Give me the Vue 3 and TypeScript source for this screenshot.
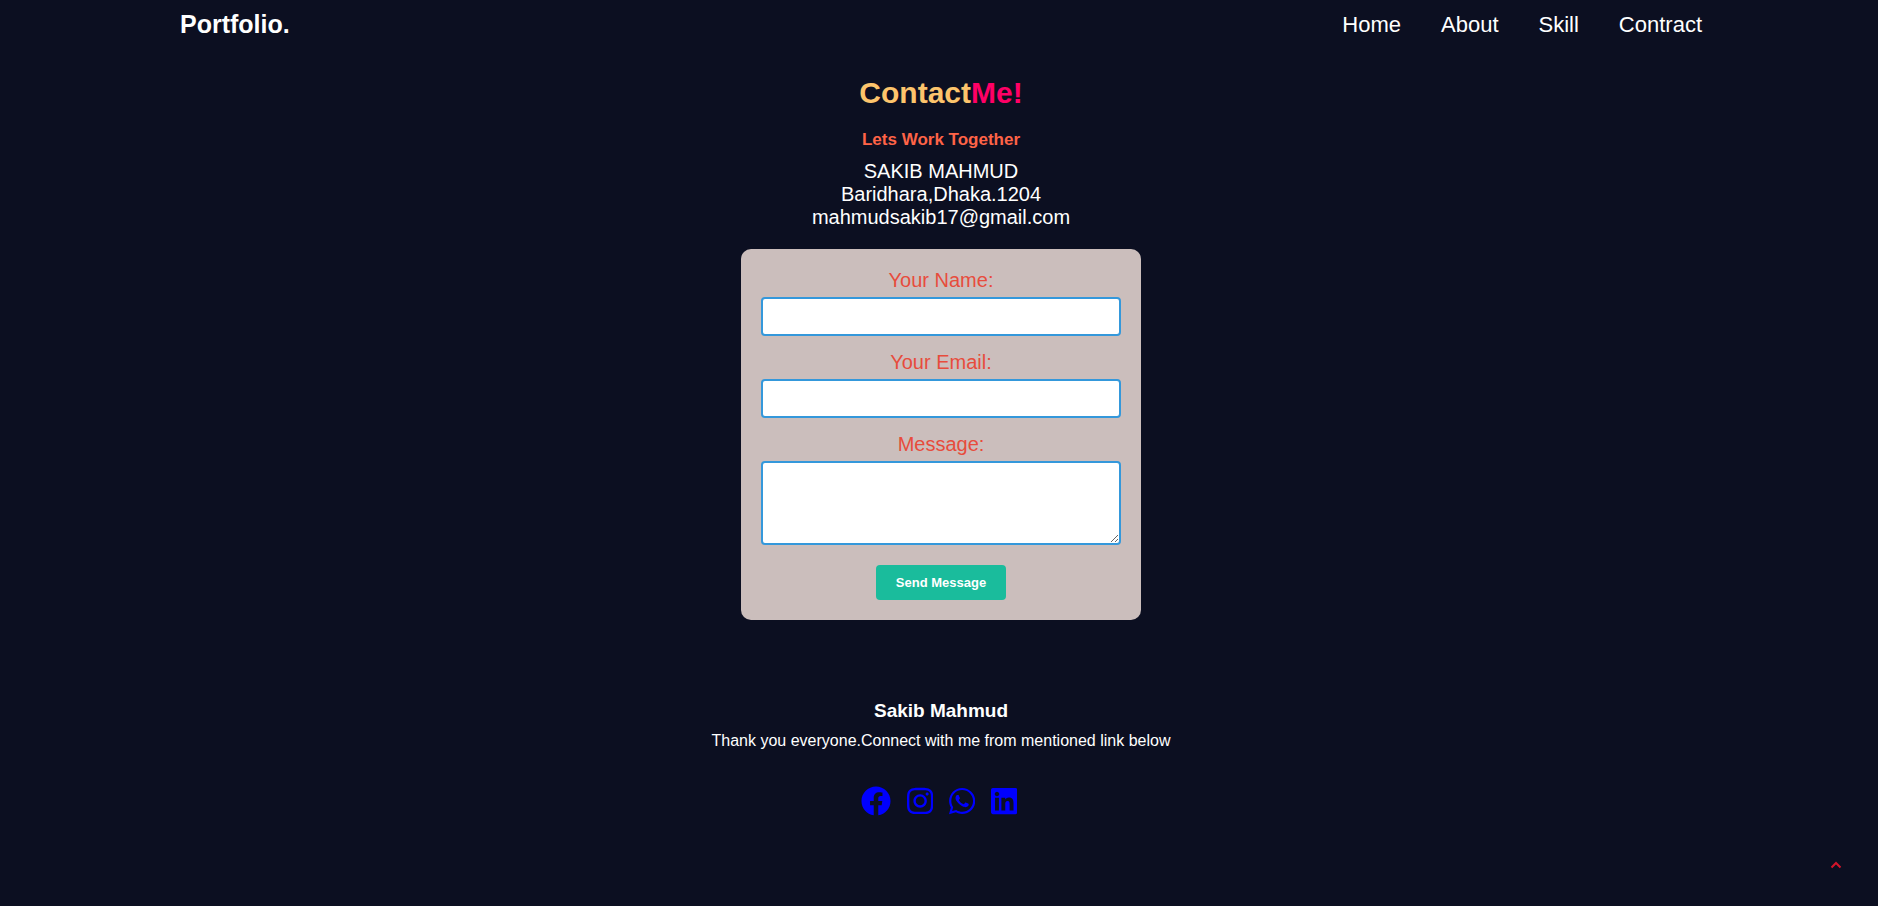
<script setup lang="ts">
import { ref } from 'vue'

interface NavLink {
  label: string
  href: string
}

interface SocialLink {
  label: string
  href: string
  width: number
  path: string
}

const navLinks: NavLink[] = [
  { label: 'Home', href: '#home' },
  { label: 'About', href: '#about' },
  { label: 'Skill', href: '#skill' },
  { label: 'Contract', href: '#contact' },
]

const socialLinks: SocialLink[] = [
  {
    label: 'Facebook',
    href: '#facebook',
    width: 512,
    path: 'M504 256C504 119 393 8 256 8S8 119 8 256c0 123.78 90.69 226.38 209.25 245V327.69h-63V256h63v-54.64c0-62.15 37-96.48 93.67-96.48 27.14 0 55.52 4.84 55.52 4.84v61h-31.28c-30.8 0-40.41 19.12-40.41 38.73V256h68.78l-11 71.69h-57.78V501C413.31 482.38 504 379.78 504 256z',
  },
  {
    label: 'Instagram',
    href: '#instagram',
    width: 448,
    path: 'M224.1 141c-63.6 0-114.9 51.3-114.9 114.9s51.3 114.9 114.9 114.9S339 319.5 339 255.9 287.7 141 224.1 141zm0 189.6c-41.1 0-74.7-33.5-74.7-74.7s33.5-74.7 74.7-74.7 74.7 33.5 74.7 74.7-33.6 74.7-74.7 74.7zm146.4-194.3c0 14.9-12 26.8-26.8 26.8-14.9 0-26.8-12-26.8-26.8s12-26.8 26.8-26.8 26.8 12 26.8 26.8zm76.1 27.2c-1.7-35.9-9.9-67.7-36.2-93.9-26.2-26.2-58-34.4-93.9-36.2-37-2.1-147.9-2.1-184.9 0-35.8 1.7-67.6 9.9-93.9 36.1s-34.4 58-36.2 93.9c-2.1 37-2.1 147.9 0 184.9 1.7 35.9 9.9 67.7 36.2 93.9s58 34.4 93.9 36.2c37 2.1 147.9 2.1 184.9 0 35.9-1.7 67.7-9.9 93.9-36.2 26.2-26.2 34.4-58 36.2-93.9 2.1-37 2.1-147.8 0-184.8zM398.8 388c-7.8 19.6-22.9 34.7-42.6 42.6-29.5 11.7-99.5 9-132.1 9s-102.7 2.6-132.1-9c-19.6-7.8-34.7-22.9-42.6-42.6-11.7-29.5-9-99.5-9-132.1s-2.6-102.7 9-132.1c7.8-19.6 22.9-34.7 42.6-42.6 29.5-11.7 99.5-9 132.1-9s102.7-2.6 132.1 9c19.6 7.8 34.7 22.9 42.6 42.6 11.7 29.5 9 99.5 9 132.1s2.7 102.7-9 132.1z',
  },
  {
    label: 'WhatsApp',
    href: '#whatsapp',
    width: 448,
    path: 'M380.9 97.1C339 55.1 283.2 32 223.9 32c-122.4 0-222 99.6-222 222 0 39.1 10.2 77.3 29.6 111L0 480l117.7-30.9c32.4 17.7 68.9 27 106.1 27h.1c122.3 0 224.1-99.6 224.1-222 0-59.3-25.2-115-67.1-157zm-157 341.6c-33.2 0-65.7-8.9-94-25.7l-6.7-4-69.8 18.3L72 359.2l-4.4-7c-18.5-29.4-28.2-63.3-28.2-98.2 0-101.7 82.8-184.5 184.6-184.5 49.3 0 95.6 19.2 130.4 54.1 34.8 34.9 56.2 81.2 56.1 130.5 0 101.8-84.9 184.6-186.6 184.6zm101.2-138.2c-5.5-2.8-32.8-16.2-37.9-18-5.1-1.9-8.8-2.8-12.5 2.8-3.7 5.6-14.3 18-17.6 21.8-3.2 3.7-6.5 4.2-12 1.4-32.6-16.3-54-29.1-75.5-66-5.7-9.8 5.7-9.1 16.3-30.3 1.8-3.7.9-6.9-.5-9.7-1.4-2.8-12.5-30.1-17.1-41.2-4.5-10.8-9.1-9.3-12.5-9.5-3.2-.2-6.9-.2-10.6-.2-3.7 0-9.7 1.4-14.8 6.9-5.1 5.6-19.4 19-19.4 46.3 0 27.3 19.9 53.7 22.6 57.4 2.8 3.7 39.1 59.7 94.8 83.8 35.2 15.2 49 16.5 66.6 13.9 10.7-1.6 32.8-13.4 37.4-26.4 4.6-13 4.6-24.1 3.2-26.4-1.3-2.5-5-3.9-10.5-6.6z',
  },
  {
    label: 'LinkedIn',
    href: '#linkedin',
    width: 448,
    path: 'M416 32H31.9C14.3 32 0 46.5 0 64.3v383.4C0 465.5 14.3 480 31.9 480H416c17.6 0 32-14.5 32-32.3V64.3c0-17.8-14.4-32.3-32-32.3zM135.4 416H69V202.2h66.5V416zm-33.2-243c-21.3 0-38.5-17.3-38.5-38.5S80.9 96 102.2 96c21.2 0 38.5 17.3 38.5 38.5 0 21.3-17.2 38.5-38.5 38.5zm282.1 243h-66.4V312c0-24.8-.5-56.7-34.5-56.7-34.6 0-39.9 27-39.9 54.9V416h-66.4V202.2h63.7v29.2h.9c8.9-16.8 30.6-34.5 62.9-34.5 67.2 0 79.7 44.3 79.7 101.9V416z',
  },
]

const name = ref('')
const email = ref('')
const message = ref('')

function sendMessage(): void {
  name.value = ''
  email.value = ''
  message.value = ''
}
</script>

<template>
  <div id="home" class="page">
    <header class="header">
      <a class="logo" href="#home">Portfolio.</a>
      <nav class="nav">
        <a v-for="link in navLinks" :key="link.label" :href="link.href">{{ link.label }}</a>
      </nav>
    </header>

    <main id="contact" class="contact">
      <h1 class="title">Contact<span>Me!</span></h1>
      <h2 class="tagline">Lets Work Together</h2>
      <address class="details">
        SAKIB MAHMUD<br />
        Baridhara,Dhaka.1204<br />
        mahmudsakib17@gmail.com
      </address>

      <form class="form" @submit.prevent="sendMessage">
        <label for="name">Your Name:</label>
        <input id="name" v-model="name" type="text" name="name" required />
        <label for="email">Your Email:</label>
        <input id="email" v-model="email" type="email" name="email" required />
        <label for="message">Message:</label>
        <textarea id="message" v-model="message" name="message" rows="4" required></textarea>
        <button type="submit">Send Message</button>
      </form>
    </main>

    <footer class="footer">
      <h3>Sakib Mahmud</h3>
      <p>Thank you everyone.Connect with me from mentioned link below</p>
      <div class="social">
        <a v-for="item in socialLinks" :key="item.label" :href="item.href" :aria-label="item.label">
          <svg :viewBox="`0 0 ${item.width} 512`" aria-hidden="true"><path :d="item.path" /></svg>
        </a>
      </div>
    </footer>

    <a class="to-top" href="#home" aria-label="Back to top">
      <svg viewBox="0 0 12 8" aria-hidden="true"><path d="M1.5 6.5 6 2l4.5 4.5" /></svg>
    </a>
  </div>
</template>

<style>
body {
  margin: 0;
  background: #0c0f21;
}
</style>

<style scoped>
.page {
  box-sizing: border-box;
  min-height: 100vh;
  padding-left: 4px;
  background: #0c0f21;
  color: #fff;
  font-family: "Liberation Sans", Arial, sans-serif;
}

.header {
  display: flex;
  align-items: center;
  justify-content: space-between;
  padding: 10px 176px;
}

.logo {
  color: #fff;
  font-size: 25px;
  font-weight: 700;
  text-decoration: none;
}

.nav {
  display: flex;
  gap: 40px;
}

.nav a {
  color: #fff;
  font-size: 22px;
  text-decoration: none;
}

.contact {
  display: flex;
  flex-direction: column;
  align-items: center;
  padding-top: 27px;
  text-align: center;
}

.title {
  margin: 0 0 20px;
  color: #fdc46c;
  font-size: 30px;
}

.title span {
  color: #ff0066;
}

.tagline {
  margin: 0 0 10px;
  color: tomato;
  font-size: 17px;
}

.details {
  margin-bottom: 20px;
  font-size: 20px;
  font-style: normal;
  line-height: 23px;
}

.form {
  display: flex;
  flex-direction: column;
  align-items: center;
  box-sizing: border-box;
  width: 100%;
  max-width: 400px;
  padding: 20px;
  border-radius: 10px;
  background: #cbbebc;
}

.form label {
  margin-bottom: 5px;
  color: #e74c3c;
  font-size: 20px;
  line-height: 23px;
}

.form input,
.form textarea {
  box-sizing: border-box;
  width: 100%;
  margin: 0 0 15px;
  padding: 10px;
  border: 2px solid #3498db;
  border-radius: 4px;
  background: #fff;
  font-family: inherit;
  font-size: 13px;
  line-height: 15px;
}

.form textarea {
  margin-bottom: 20px;
  resize: vertical;
}

.form button {
  padding: 10px 20px;
  border: 0;
  border-radius: 4px;
  background: #1abc9c;
  color: #fff;
  font-family: inherit;
  font-size: 13px;
  font-weight: 700;
  line-height: 15px;
  cursor: pointer;
}

.footer {
  padding: 80px 0 40px;
  text-align: center;
}

.footer h3 {
  margin: 0 0 10px;
  font-size: 19px;
}

.footer p {
  margin: 0;
  font-size: 16px;
}

.social {
  display: flex;
  justify-content: center;
  gap: 16px;
  margin-top: 36px;
  padding-right: 4px;
}

.social svg {
  display: block;
  height: 30px;
  fill: #0000ff;
}

.to-top {
  position: fixed;
  right: 36px;
  bottom: 37px;
}

.to-top svg {
  display: block;
  width: 12px;
  height: 8px;
  fill: none;
  stroke: #d4142a;
  stroke-width: 2;
}
</style>
